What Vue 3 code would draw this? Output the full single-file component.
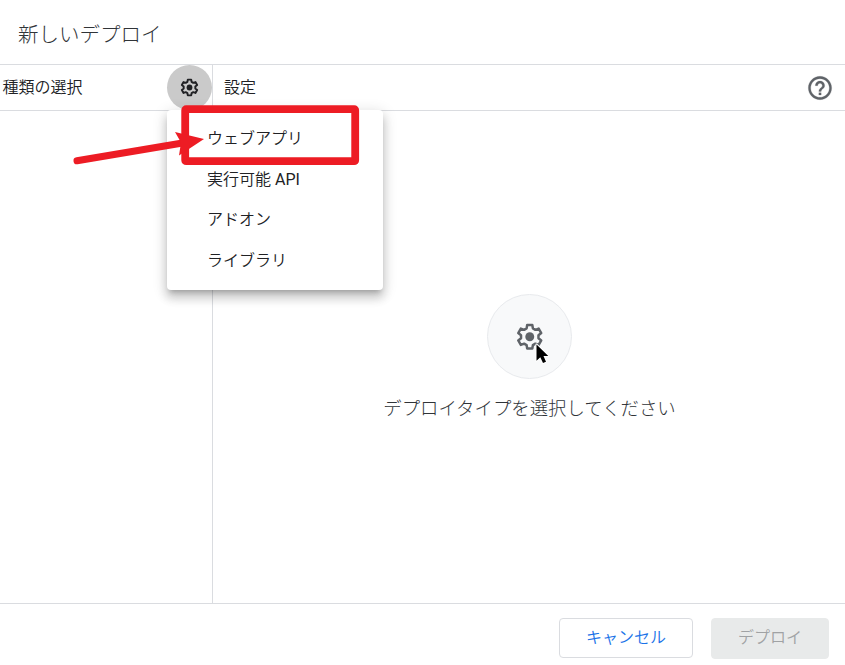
<script setup>
const menuItems = [
  { text: 'ウェブアプリ' },
  { text: '実行可能', latin: 'API' },
  { text: 'アドオン' },
  { text: 'ライブラリ' },
]
const gearPath = 'M10.05 3H13.95L14.4 5.65L16.29 6.75L18.79 5.8L20.75 9.2L18.65 10.9V13.1L20.75 14.8L18.79 18.2L16.29 17.25L14.4 18.35L13.95 21H10.05L9.6 18.35L7.71 17.25L5.21 18.2L3.25 14.8L5.35 13.1V10.9L3.25 9.2L5.21 5.8L7.71 6.75L9.6 5.65Z'
</script>

<template>
  <div class="dialog">
    <header class="title"><h1>新しいデプロイ</h1></header>
    <main class="body">
      <aside class="types">
        <div class="bar types-bar">
          <span>種類の選択</span>
          <button class="gear-button" aria-label="種類">
            <svg width="21" height="21" viewBox="0 0 24 24">
              <path :d="gearPath" fill="none" stroke="currentColor" stroke-width="2.2" stroke-linejoin="round" />
              <circle cx="12" cy="12" r="3.3" fill="currentColor" />
            </svg>
          </button>
        </div>
        <ul class="menu">
          <li v-for="item in menuItems" :key="item.text">{{ item.text }}<span v-if="item.latin" class="latin">{{ ' ' + item.latin }}</span></li>
        </ul>
      </aside>
      <section class="settings">
        <div class="bar settings-bar">
          <span>設定</span>
          <svg class="help" width="28" height="28" viewBox="0 0 24 24" fill="currentColor" stroke="currentColor" stroke-width=".2">
            <path d="M11 18h2v-2h-2v2zm1-16C6.48 2 2 6.48 2 12s4.48 10 10 10 10-4.48 10-10S17.52 2 12 2zm0 18c-4.41 0-8-3.59-8-8s3.59-8 8-8 8 3.59 8 8-3.59 8-8 8zm0-14c-2.21 0-4 1.79-4 4h2c0-1.1.9-2 2-2s2 .9 2 2c0 2-3 1.75-3 5h2c0-2.25 3-2.5 3-5 0-2.21-1.79-4-4-4z" />
          </svg>
        </div>
        <div class="empty">
          <div class="empty-icon">
            <svg width="31.5" height="31.5" viewBox="0 0 24 24">
              <path :d="gearPath" fill="none" stroke="currentColor" stroke-width="1.9" stroke-linejoin="round" />
              <circle cx="12" cy="12" r="3.4" fill="currentColor" />
            </svg>
          </div>
          <p>デプロイタイプを選択してください</p>
        </div>
      </section>
    </main>
    <footer class="actions">
      <button class="action cancel">キャンセル</button>
      <button class="action deploy" disabled>デプロイ</button>
    </footer>
    <svg class="overlay" width="845" height="665" viewBox="0 0 845 665">
      <rect x="185.2" y="109.2" width="170" height="52" rx="1" fill="none" stroke="#ed1c24" stroke-width="7.8" />
      <path d="M77 160.8L184 142.8" stroke="#ed1c24" stroke-width="7" stroke-linecap="round" />
      <path d="M204 139L175 132L181 142.5L179 155.5Z" fill="#ed1c24" />
      <path d="M536.5 344.5V360.8L540.3 357.3L543 363L546 361.7L543.5 356H548.3Z" fill="#000" stroke="#fff" stroke-width="2" stroke-linejoin="round" paint-order="stroke" />
    </svg>
  </div>
</template>

<style>
body { margin: 0; background: #fff; }
</style>

<style scoped>
* { box-sizing: border-box; }
.dialog {
  position: relative;
  display: flex;
  flex-direction: column;
  width: 845px;
  height: 665px;
  overflow: hidden;
  color: #202124;
  background: #fff;
  font: 350 16px/24px Roboto, "Noto Sans CJK JP", sans-serif;
}
.title { height: 65px; padding: 19px 18px 0; border-bottom: 1px solid #dadce0; }
h1 { margin: 0; font-size: 20.5px; line-height: 32px; font-weight: 300; color: #303438; }
.body { display: flex; height: 538px; }
.types { position: relative; width: 213px; border-right: 1px solid #dadce0; }
.settings { flex: 1; display: flex; flex-direction: column; }
.bar { display: flex; align-items: center; justify-content: space-between; height: 46px; border-bottom: 1px solid #dadce0; }
.types-bar { padding-left: 2.5px; }
.gear-button {
  display: flex;
  align-items: center;
  justify-content: center;
  width: 45px;
  height: 45px;
  padding: 0;
  border: 0;
  border-radius: 50%;
  color: #202124;
  background: #cacaca;
}
.settings-bar { padding: 0 11px; }
.help { color: #5f6368; margin-top: 1px; }
.menu {
  position: absolute;
  z-index: 2;
  top: 45px;
  left: 167px;
  width: 216px;
  height: 180px;
  margin: 0;
  padding: 9px 0 7px;
  list-style: none;
  background: #fff;
  border-radius: 4px;
  box-shadow: 0 5px 5px -3px rgba(0, 0, 0, .2), 0 8px 10px 1px rgba(0, 0, 0, .14), 0 3px 14px 2px rgba(0, 0, 0, .12);
}
.menu li { height: 40.6px; padding-left: 40px; line-height: 40px; }
.latin { font-weight: 400; }
.empty { display: flex; flex-direction: column; align-items: center; padding: 183px 0 0 1px; }
.empty-icon {
  display: flex;
  align-items: center;
  justify-content: center;
  width: 85px;
  height: 85px;
  padding-left: 1px;
  border: 1px solid #e8eaed;
  border-radius: 50%;
  color: #5f6368;
  background: #f8f9fa;
}
.empty p { margin: 17px 0 0; font-size: 18.4px; line-height: 26px; font-weight: 300; color: #303438; }
.actions { flex: 1; display: flex; justify-content: flex-end; gap: 18px; padding: 14px 16px 0 0; border-top: 1px solid #dadce0; }
.action { height: 40px; padding: 0; border: 1px solid #dadce0; border-radius: 4px; font: inherit; background: #fff; }
.cancel { width: 134px; color: #1a73e8; }
.deploy { width: 118px; height: 41px; padding-bottom: 2px; border-color: #e8eaea; color: #a0a2a4; background: #e8eaea; }
.overlay { position: absolute; z-index: 3; inset: 0; pointer-events: none; }
</style>
